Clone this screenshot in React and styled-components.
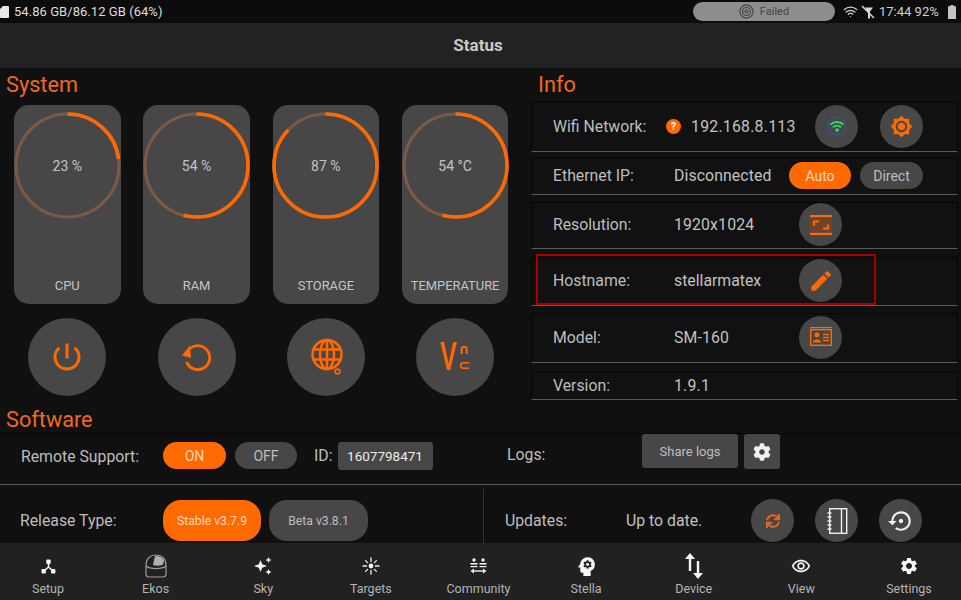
import React from 'react'
import styled, { createGlobalStyle } from 'styled-components'
import { FaCog, FaSync } from 'react-icons/fa'
import { MdBrightness7, MdEdit, MdOutlineRemoveRedEye, MdPowerSettingsNew, MdPsychology, MdSettings, MdSettingsBackupRestore } from 'react-icons/md'
import { Wifi } from 'lucide-react'

const ORANGE = '#ff6a00'

const GlobalStyle = createGlobalStyle`
  html, body { margin: 0; padding: 0; background: #101010; }
  * { box-sizing: border-box; }
`

const Page = styled.div`
  width: 961px;
  height: 600px;
  display: flex;
  flex-direction: column;
  overflow: hidden;
  position: relative;
  background: #101010;
  color: #bdbdbd;
  font-family: Roboto, "Liberation Sans", sans-serif;
`

const StatusBar = styled.div`
  height: 23px;
  flex: none;
  display: flex;
  align-items: center;
  background: #0c0c0c;
  color: #dedede;
  font-size: 13px;
`

const StorageText = styled.span`
  margin-left: 5px;
  letter-spacing: 0.05px;
`

const FailedPill = styled.div`
  width: 142px;
  height: 19px;
  margin-left: auto;
  display: flex;
  align-items: center;
  justify-content: center;
  gap: 6px;
  background: #8d8d8d;
  border-radius: 10px;
  color: #444;
  font-size: 11px;
`

const StatusIcons = styled.div`
  width: 126px;
  flex: none;
  display: flex;
  align-items: center;
  padding-left: 8px;
  color: #d0d0d0;
`

const Clock = styled.span`
  width: 69px;
  margin-left: 4px;
  font-size: 13px;
  white-space: nowrap;
`

const Header = styled.div`
  height: 45px;
  flex: none;
  display: flex;
  align-items: center;
  justify-content: center;
  padding-right: 5px;
  padding-bottom: 2px;
  background: #222;
  color: #c8c8c8;
  font-size: 17px;
  font-weight: 700;
`

const Main = styled.div`
  flex: 1;
  display: flex;
  flex-direction: column;
  min-height: 0;
`

const TopArea = styled.div`
  height: 339px;
  flex: none;
  display: flex;
`

const SystemColumn = styled.div`
  width: 531px;
  flex: none;
`

const InfoColumn = styled.div`
  width: 427px;
  flex: none;
`

const SectionTitle = styled.div`
  height: ${p => p.$h}px;
  padding-left: ${p => p.$x}px;
  margin-top: ${p => p.$mt || 0}px;
  padding-top: ${p => p.$top}px;
  color: #f0691c;
  font-size: 21.7px;
  line-height: 27px;
`

const GaugeGrid = styled.div`
  display: grid;
  grid-template-columns: repeat(4, 106.5px);
  column-gap: 22.8px;
  padding-left: 14px;
`

const GaugeCard = styled.div`
  height: 199px;
  display: flex;
  flex-direction: column;
  align-items: center;
  background: #474747;
  border-radius: 15px;
  padding-top: 7px;
`

const GaugeDial = styled.div`
  display: grid;
  place-items: center;
  & > * { grid-area: 1 / 1; }
`

const GaugeValue = styled.span`
  font-size: 14px;
  padding-top: 1px;
  color: #c4c4c4;
`

const GaugeName = styled.span`
  margin-top: auto;
  margin-bottom: 11px;
  font-size: 12.9px;
  color: #c4c4c4;
`

const ActionGrid = styled(GaugeGrid)`
  justify-items: center;
  margin-top: 14px;
`

const RoundButton = styled.div`
  width: ${p => p.$size}px;
  height: ${p => p.$size}px;
  margin-right: ${p => p.$mr || 0}px;
  flex: none;
  display: flex;
  align-items: center;
  justify-content: center;
  border-radius: 50%;
  background: #474747;
  color: ${p => p.$color || ORANGE};
`

const InfoRow = styled.div`
  height: ${p => p.$h}px;
  margin-top: ${p => p.$gap}px;
  display: flex;
  align-items: center;
  padding-left: 21px;
  padding-bottom: 2px;
  background: #111;
  border: 1px solid #050505;
  border-bottom: 1px solid #5a5a5a;
  font-size: 15.8px;
`

const Label = styled.span`
  width: ${p => p.$w || 121}px;
  margin-top: ${p => p.$mt || 0}px;
  flex: none;
  color: #bdbdbd;
`

const Value = styled.span`
  width: ${p => p.$w || 125}px;
  flex: none;
  color: #c2c2c2;
  letter-spacing: ${p => p.$ls || 0}px;
  white-space: nowrap;
`

const Question = styled.span`
  width: 15px;
  height: 15px;
  margin-right: 10px;
  flex: none;
  display: flex;
  align-items: center;
  justify-content: center;
  border-radius: 50%;
  background: ${ORANGE};
  color: #fff;
  font-size: 11px;
  font-weight: 700;
`

const Pill = styled.div`
  width: ${p => p.$w}px;
  height: ${p => p.$h}px;
  margin-right: ${p => p.$mr || 0}px;
  flex: none;
  display: flex;
  align-items: center;
  justify-content: center;
  border-radius: ${p => Math.min(p.$h / 2, 18)}px;
  background: ${p => (p.$on ? ORANGE : '#474747')};
  color: ${p => (p.$on ? '#ffd9bd' : '#bdbdbd')};
  font-size: ${p => p.$fs || 14}px;
`

const Highlight = styled.div`
  position: absolute;
  left: 536px;
  top: 254px;
  width: 340px;
  height: 51px;
  border: 2px solid #a80000;
  pointer-events: none;
`

const SoftwareRow = styled.div`
  height: ${p => p.$h}px;
  flex: none;
  display: flex;
  border-top: ${p => (p.$top ? '1px solid #050505' : 'none')};
  border-bottom: ${p => (p.$bottom ? '1px solid #5a5a5a' : 'none')};
  font-size: 15.8px;
`

const SoftCell = styled.div`
  width: ${p => (p.$w ? `${p.$w}px` : 'auto')};
  flex: ${p => (p.$w ? 'none' : '1')};
  display: flex;
  align-items: ${p => p.$align || 'center'};
  padding-left: ${p => p.$x}px;
  padding-top: ${p => p.$pt || 0}px;
  padding-bottom: ${p => p.$pb || 0}px;
`

const UpdatesCell = styled(SoftCell)`
  margin-top: 4px;
  border-left: 1px solid #333;
`

const IdBox = styled.div`
  width: 95px;
  height: 28px;
  margin-left: 5px;
  display: flex;
  align-items: center;
  justify-content: center;
  background: #474747;
  border-radius: 3px;
  color: #ececec;
  font-size: 13.5px;
`

const SquareButton = styled.div`
  width: ${p => p.$w}px;
  height: ${p => p.$h}px;
  margin-right: 6px;
  display: flex;
  align-items: center;
  justify-content: center;
  background: #474747;
  border-radius: 3px;
  color: ${p => p.$color || '#bdbdbd'};
  font-size: 13px;
`

const BottomNav = styled.div`
  height: 57px;
  flex: none;
  display: flex;
  justify-content: space-between;
  padding-right: 4px;
  background: #212121;
`

const NavItem = styled.div`
  width: 96px;
  display: flex;
  flex-direction: column;
  align-items: center;
  color: #b4b4b4;
  font-size: 12.5px;
`

const NavIcon = styled.div`
  height: 38px;
  display: flex;
  align-items: center;
  justify-content: center;
  padding-top: 8px;
  color: #f4f4f4;
`

const VncMark = styled.div`
  display: flex;
  align-items: center;
  color: ${ORANGE};
  font-family: "DejaVu Sans", sans-serif;
  line-height: 1;
`

const VncBig = styled.span`
  width: 18px;
  font-family: Roboto, sans-serif;
  font-size: 38px;
  font-weight: 500;
  transform: scaleX(0.68);
  transform-origin: left center;
`

const VncSmall = styled.span`
  display: flex;
  flex-direction: column;
  gap: 2.5px;
  font-size: 14px;
  line-height: 14px;
  font-weight: 700;
`

const gauges = [
  { name: 'CPU', value: '23 %', pct: 23 },
  { name: 'RAM', value: '54 %', pct: 54 },
  { name: 'STORAGE', value: '87 %', pct: 87 },
  { name: 'TEMPERATURE', value: '54 °C', pct: 54 },
]

function Ring({ pct }) {
  const r = 51.5
  const c = 2 * Math.PI * r
  return (
    <svg width="107" height="107" viewBox="0 0 107 107">
      <circle cx="53.5" cy="53.5" r={r} fill="none" stroke="#7a5a45" strokeWidth="3.2" />
      <circle
        cx="53.5"
        cy="53.5"
        r={r}
        fill="none"
        stroke={ORANGE}
        strokeWidth="3.6"
        strokeDasharray={`${(c * pct) / 100} ${c}`}
        transform="rotate(-90 53.5 53.5)"
      />
    </svg>
  )
}

const StorageIcon = () => (
  <svg width="9" height="12" viewBox="0 0 9 12">
    <path d="M3 0H8a1 1 0 0 1 1 1V11a1 1 0 0 1-1 1H1a1 1 0 0 1-1-1V3Z" fill="#e8e8e8" />
  </svg>
)

const TargetIcon = () => (
  <svg width="15" height="15" viewBox="0 0 15 15" fill="none" stroke="#444" strokeWidth="1.2">
    <circle cx="7.5" cy="7.5" r="6.6" />
    <circle cx="7.5" cy="7.5" r="4" />
    <circle cx="7.5" cy="7.5" r="1.5" />
  </svg>
)

const NoSignalIcon = () => (
  <svg width="14" height="14" viewBox="0 0 14 14" style={{ marginLeft: 3 }}>
    <path d="M1 1L13 13" stroke="#d8d8d8" strokeWidth="1.5" />
    <path d="M4 2.5H12L9 6.5V13.5H7V7.5Z" fill="#d8d8d8" />
  </svg>
)

const BatteryIcon = () => (
  <svg width="8" height="14" viewBox="0 0 8 14" style={{ flex: 'none' }}>
    <path d="M2.5 0H5.5V1.3H8V14H0V1.3H2.5Z" fill="#c4c4c4" />
  </svg>
)

const ReloadIcon = () => (
  <svg width="34" height="34" viewBox="0 0 34 34" fill="none">
    <path d="M10.5 8A12 12 0 1 1 7 23" stroke={ORANGE} strokeWidth="2.8" strokeLinecap="round" />
    <path d="M10 5.5L11 18L2 15.5Z" fill={ORANGE} />
  </svg>
)

const GlobeIcon = () => (
  <svg width="38" height="38" viewBox="0 0 38 38" fill="none" stroke={ORANGE} strokeWidth="2.5">
    <circle cx="20" cy="16.5" r="14.5" />
    <ellipse cx="20" cy="16.5" rx="7" ry="14.5" />
    <path d="M20 2V31M6.6 11.5H33.4M6.6 21.5H33.4" />
    <circle cx="30.5" cy="33.5" r="2.4" strokeWidth="1.6" />
  </svg>
)

const WifiStatusIcon = () => (
  <svg width="20" height="20" viewBox="0 0 20 20" fill="none">
    <circle cx="10" cy="10" r="9" stroke="#2c5b94" strokeWidth="1.2" />
    <path d="M3.5 8.5A9.5 9.5 0 0 1 16.5 8.5M6 11.2A6 6 0 0 1 14 11.2" stroke="#2fdc70" strokeWidth="2" />
    <circle cx="10" cy="14" r="1.8" fill="#2fdc70" />
  </svg>
)

const ResolutionIcon = () => (
  <svg width="22" height="22" viewBox="0 0 22 22">
    <path d="M0 1H22V3.2H0ZM0 18.8H22V21H0Z" fill={ORANGE} />
    <rect x="0" y="4.2" width="22" height="13.6" fill="#6e4526" />
    <path d="M3 6.5H9V8.5H5V11.5H3ZM19 15.5H13V13.5H17V10.5H19Z" fill={ORANGE} />
  </svg>
)

const CardIcon = () => (
  <svg width="22" height="20" viewBox="0 0 22 20" fill="none">
    <rect x="0.7" y="2.7" width="20.6" height="15.6" stroke={ORANGE} strokeWidth="1.4" />
    <path d="M0 0.5H22" stroke={ORANGE} strokeWidth="1.4" />
    <circle cx="7" cy="8" r="2.4" fill={ORANGE} />
    <path d="M3 15.5C3 11.5 11 11.5 11 15.5Z" fill={ORANGE} />
    <path d="M13 7.5H19M13 10.5H19M13 13.5H19" stroke={ORANGE} strokeWidth="1.4" />
  </svg>
)

const NotebookIcon = () => (
  <svg width="22" height="26" viewBox="0 0 22 26" fill="none" stroke="#f0f0f0" strokeWidth="1.4">
    <rect x="3.7" y="0.7" width="17" height="24.6" />
    <path d="M15.5 1V25" />
    <path d="M1.5 5H5.5M1.5 9H5.5M1.5 13H5.5M1.5 17H5.5M1.5 21H5.5" />
  </svg>
)

const SetupIcon = () => (
  <svg width="15" height="15" viewBox="0 0 15 15" fill="#f4f4f4">
    <rect x="5.3" y="0.5" width="4.4" height="4.4" rx="1" />
    <rect x="0.5" y="10" width="4.4" height="4.4" rx="1" />
    <rect x="10" y="10" width="4.4" height="4.4" rx="1" />
    <path d="M7.5 4V8M7.5 8L3 12M7.5 8L12 12" stroke="#f4f4f4" strokeWidth="1.5" fill="none" />
  </svg>
)

const DomeIcon = () => (
  <svg width="22" height="24" viewBox="0 0 22 24" fill="none" stroke="#9c9c9c" strokeWidth="1.2">
    <path d="M1 12V20a3 3 0 0 0 3 3H18a3 3 0 0 0 3-3V12" />
    <path d="M1 12C1 4 5.5 1 11 1S21 4 21 12C17 15.5 5 15.5 1 12Z" />
    <path d="M8 11L10 2.2C13 1.6 17 3 19 6.2L18 10.5C15 12 11 12 8 11Z" fill="#b0b0b0" stroke="none" />
  </svg>
)

const SkyIcon = () => (
  <svg width="18" height="18" viewBox="0 0 18 18" fill="#f4f4f4">
    <path d="M6.5 3L8.2 7.3L13 9L8.2 10.7L6.5 15L4.8 10.7L0 9L4.8 7.3Z" />
    <path d="M14.5 0L15.4 2.1L17.5 3L15.4 3.9L14.5 6L13.6 3.9L11.5 3L13.6 2.1Z" />
    <path d="M14.5 12L15.4 14.1L17.5 15L15.4 15.9L14.5 18L13.6 15.9L11.5 15L13.6 14.1Z" />
  </svg>
)

const TargetsIcon = () => (
  <svg width="18" height="18" viewBox="0 0 18 18" stroke="#f4f4f4" strokeWidth="1.3" strokeLinecap="round">
    <circle cx="9" cy="9" r="2.4" fill="#f4f4f4" stroke="none" />
    <path d="M9 1V4.5M9 13.5V17M1 9H4.5M13.5 9H17M3.6 3.6L5.6 5.6M12.4 12.4L14.4 14.4M3.6 14.4L5.6 12.4M12.4 5.6L14.4 3.6" />
  </svg>
)

const CommunityIcon = () => (
  <svg width="17" height="16" viewBox="0 0 17 16" fill="#f0f0f0">
    <circle cx="4" cy="2" r="1.7" />
    <circle cx="13" cy="2" r="1.7" />
    <rect x="0.5" y="5" width="7" height="1.6" />
    <rect x="9.5" y="5" width="7" height="1.6" />
    <rect x="0.5" y="8" width="7" height="1.2" />
    <rect x="9.5" y="8" width="7" height="1.2" />
    <path d="M3 13H14" stroke="#f0f0f0" strokeWidth="1.4" />
    <path d="M4 10.5V15.5L0.5 13ZM13 10.5V15.5L16.5 13Z" />
  </svg>
)

const DeviceIcon = () => (
  <svg width="20" height="26" viewBox="0 0 20 26" fill="#f4f4f4">
    <path d="M6 0L11 6H7.2V18H4.8V6H1Z" />
    <path d="M14 26L19 20H15.2V8H12.8V20H9Z" />
  </svg>
)

const navItems = [
  { label: 'Setup', icon: <SetupIcon /> },
  { label: 'Ekos', icon: <DomeIcon /> },
  { label: 'Sky', icon: <SkyIcon /> },
  { label: 'Targets', icon: <TargetsIcon /> },
  { label: 'Community', icon: <CommunityIcon /> },
  { label: 'Stella', icon: <MdPsychology size={25} /> },
  { label: 'Device', icon: <DeviceIcon /> },
  { label: 'View', icon: <MdOutlineRemoveRedEye size={20} /> },
  { label: 'Settings', icon: <MdSettings size={20} /> },
]

export default function App() {
  return (
    <Page>
      <GlobalStyle />
      <StatusBar>
        <StorageIcon />
        <StorageText>54.86 GB/86.12 GB (64%)</StorageText>
        <FailedPill>
          <TargetIcon />
          Failed
        </FailedPill>
        <StatusIcons>
          <Wifi size={15} strokeWidth={2} />
          <NoSignalIcon />
          <Clock>17:44 92%</Clock>
          <BatteryIcon />
        </StatusIcons>
      </StatusBar>
      <Header>Status</Header>
      <Main>
        <TopArea>
          <SystemColumn>
            <SectionTitle $h={37} $x={6} $top={3}>System</SectionTitle>
            <GaugeGrid>
              {gauges.map(g => (
                <GaugeCard key={g.name}>
                  <GaugeDial>
                    <Ring pct={g.pct} />
                    <GaugeValue>{g.value}</GaugeValue>
                  </GaugeDial>
                  <GaugeName>{g.name}</GaugeName>
                </GaugeCard>
              ))}
            </GaugeGrid>
            <ActionGrid>
              <RoundButton $size={78}><MdPowerSettingsNew size={36} /></RoundButton>
              <RoundButton $size={78}><ReloadIcon /></RoundButton>
              <RoundButton $size={78}><GlobeIcon /></RoundButton>
              <RoundButton $size={78}>
                <VncMark>
                  <VncBig>V</VncBig>
                  <VncSmall><span>∩</span><span>⊂</span></VncSmall>
                </VncMark>
              </RoundButton>
            </ActionGrid>
          </SystemColumn>
          <InfoColumn>
            <SectionTitle $h={34} $x={7} $top={3}>Info</SectionTitle>
            <InfoRow $h={50} $gap={0}>
              <Label $w={113}>Wifi Network:</Label>
              <Question>?</Question>
              <Value $w={124} $ls={0.25}>192.168.8.113</Value>
              <RoundButton $size={43} $mr={22}><WifiStatusIcon /></RoundButton>
              <RoundButton $size={43}><MdBrightness7 size={23} /></RoundButton>
            </InfoRow>
            <InfoRow $h={37} $gap={6}>
              <Label>Ethernet IP:</Label>
              <Value $w={115} $ls={0.1}>Disconnected</Value>
              <Pill $on $w={62} $h={27} $mr={9}>Auto</Pill>
              <Pill $w={63} $h={27}>Direct</Pill>
            </InfoRow>
            <InfoRow $h={47} $gap={7}>
              <Label>Resolution:</Label>
              <Value $ls={0.15}>1920x1024</Value>
              <RoundButton $size={43}><ResolutionIcon /></RoundButton>
            </InfoRow>
            <InfoRow $h={49} $gap={8}>
              <Label>Hostname:</Label>
              <Value>stellarmatex</Value>
              <RoundButton $size={43}><MdEdit size={26} /></RoundButton>
            </InfoRow>
            <InfoRow $h={50} $gap={7}>
              <Label>Model:</Label>
              <Value $ls={0.15}>SM-160</Value>
              <RoundButton $size={43}><CardIcon /></RoundButton>
            </InfoRow>
            <InfoRow $h={28} $gap={9}>
              <Label>Version:</Label>
              <Value $ls={0.2}>1.9.1</Value>
            </InfoRow>
          </InfoColumn>
        </TopArea>
        <SectionTitle $h={27} $x={6} $top={0} $mt={-1}>Software</SectionTitle>
        <SoftwareRow $h={52} $top $bottom>
          <SoftCell $w={486} $x={21} $pb={7}>
            <Label $w={142} $mt={1}>Remote Support:</Label>
            <Pill $on $w={63} $h={27} $mr={9}>ON</Pill>
            <Pill $w={62} $h={27} $mr={17}>OFF</Pill>
            ID:
            <IdBox>1607798471</IdBox>
          </SoftCell>
          <SoftCell $x={21} $align="flex-start">
            <Label $w={135} $mt={11}>Logs:</Label>
            <SquareButton $w={96} $h={34}>Share logs</SquareButton>
            <SquareButton $w={36} $h={35} $color="#f0f0f0"><FaCog size={18} /></SquareButton>
          </SoftCell>
        </SoftwareRow>
        <SoftwareRow $h={58}>
          <SoftCell $w={483} $x={20} $pt={13}>
            <Label $w={143}>Release Type:</Label>
            <Pill $on $w={98} $h={41} $mr={8} $fs={12.2}>Stable v3.7.9</Pill>
            <Pill $w={99} $h={41} $fs={12.2}>Beta v3.8.1</Pill>
          </SoftCell>
          <UpdatesCell $x={21} $pt={9}>
            <Label $w={121}>Updates:</Label>
            <Value $w={125}>Up to date.</Value>
            <RoundButton $size={43} $mr={21} $color="#e8661e"><FaSync size={14} /></RoundButton>
            <RoundButton $size={43} $mr={21} $color="#f0f0f0"><NotebookIcon /></RoundButton>
            <RoundButton $size={43} $color="#f0f0f0"><MdSettingsBackupRestore size={26} /></RoundButton>
          </UpdatesCell>
        </SoftwareRow>
      </Main>
      <BottomNav>
        {navItems.map(item => (
          <NavItem key={item.label}>
            <NavIcon>{item.icon}</NavIcon>
            {item.label}
          </NavItem>
        ))}
      </BottomNav>
      <Highlight />
    </Page>
  )
}
